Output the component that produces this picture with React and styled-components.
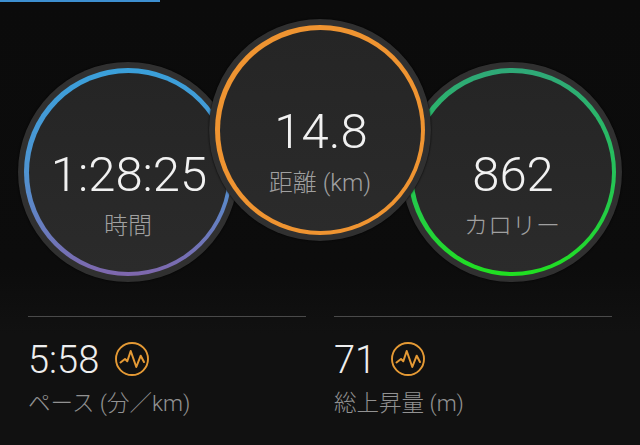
import React from 'react';
import styled, { createGlobalStyle } from 'styled-components';

const Global = createGlobalStyle`
  html, body { margin: 0; padding: 0; background: #0d0d0d; }
  body { width: 640px; height: 445px; overflow: hidden; }
`;
const Page = styled.div`
  position: relative;
  width: 640px;
  height: 445px;
  overflow: hidden;
  background: linear-gradient(#0b0b0b, #0c0c0c 60%, #111 75%);
  font-family: Roboto, "Noto Sans CJK JP", sans-serif;
`;
const TopBar = styled.div`
  width: 160px;
  height: 2px;
  background: #3d8fd0;
`;
const Circles = styled.div`
  display: flex;
  align-items: flex-start;
  padding: 17px 0 0 18px;
`;
const Disc = styled.div`
  width: ${p => p.$size}px;
  height: ${p => p.$size}px;
  box-sizing: border-box;
  border-radius: 50%;
  padding: 6px;
  background: #303030;
  flex: none;
  position: relative;
  z-index: ${p => (p.$front ? 2 : 1)};
  margin-top: ${p => p.$top}px;
  margin-left: ${p => p.$left}px;
  box-shadow: 0 0 2px #000;
`;
const Ring = styled.div`
  width: 100%;
  height: 100%;
  box-sizing: border-box;
  border-radius: 50%;
  padding: 4.5px;
  background: ${p => p.$color};
`;
const Face = styled.div`
  width: 100%;
  height: 100%;
  border-radius: 50%;
  background: linear-gradient(#252525, #2b2b2b);
  display: flex;
  flex-direction: column;
  align-items: center;
  padding-top: ${p => p.$pad}px;
  box-sizing: border-box;
`;
const BigValue = styled.div`
  color: #f1f1f1;
  font-weight: 300;
  font-size: 49px;
  line-height: 56px;
  white-space: nowrap;
  margin-left: 2px;
`;
const CircleLabel = styled.div`
  color: #a0a0a0;
  font-weight: 300;
  font-size: 24px;
  line-height: 30px;
  margin-top: 8px;
  white-space: nowrap;
`;
const Stats = styled.div`
  display: grid;
  grid-template-columns: 278px 278px;
  column-gap: 28px;
  padding: 34px 0 0 28px;
`;
const Stat = styled.div`
  border-top: 1px solid #4a4a4a;
`;
const ValueRow = styled.div`
  display: flex;
  align-items: center;
  gap: ${p => p.$gap}px;
  margin-top: 24px;
  height: 36px;
`;
const StatValue = styled.div`
  color: #eee;
  font-weight: 300;
  font-size: 38px;
  line-height: 36px;
  margin-top: 2px;
`;
const StatLabel = styled.div`
  color: #929292;
  font-weight: 300;
  font-size: 22.5px;
  line-height: 28px;
  margin-top: 12px;
  white-space: nowrap;
`;
const Icon = styled.svg`
  width: 36px;
  height: 36px;
  flex: none;
`;

const Wave = () => (
  <Icon viewBox="0 0 36 36" fill="none" stroke="#e59a35">
    <circle cx="18" cy="18" r="16" strokeWidth="1.9" />
    <path
      d="M6.5 21.5 11 18 13.3 20.3 16.7 10 22.3 26 26.7 14.7 30 21"
      strokeWidth="2"
      strokeLinejoin="round"
      strokeLinecap="round"
    />
  </Icon>
);

const Metric = ({ value, label, color, size, top, left, front, pad }) => (
  <Disc $size={size} $top={top} $left={left} $front={front}>
    <Ring $color={color}>
      <Face $pad={pad}>
        <BigValue>{value}</BigValue>
        <CircleLabel>{label}</CircleLabel>
      </Face>
    </Ring>
  </Disc>
);

const StatBlock = ({ value, label, gap }) => (
  <Stat>
    <ValueRow $gap={gap}>
      <StatValue>{value}</StatValue>
      <Wave />
    </ValueRow>
    <StatLabel>{label}</StatLabel>
  </Stat>
);

export default function App() {
  return (
    <Page>
      <Global />
      <TopBar />
      <Circles>
        <Metric value="1:28:25" label="時間" size={220} top={43} left={0} pad={74}
          color="linear-gradient(#3aa0da 0%, #4f94d2 50%, #7f67ad 100%)" />
        <Metric value="14.8" label="距離 (km)" size={222} top={0} left={-29} front pad={74}
          color="#ef9431" />
        <Metric value="862" label="カロリー" size={220} top={43} left={-29} pad={74}
          color="linear-gradient(#2fa878 0%, #25c25a 50%, #20e020 100%)" />
      </Circles>
      <Stats>
        <StatBlock value="5:58" label="ペース (分／km)" gap={15} />
        <StatBlock value="71" label="総上昇量 (m)" gap={14} />
      </Stats>
    </Page>
  );
}
